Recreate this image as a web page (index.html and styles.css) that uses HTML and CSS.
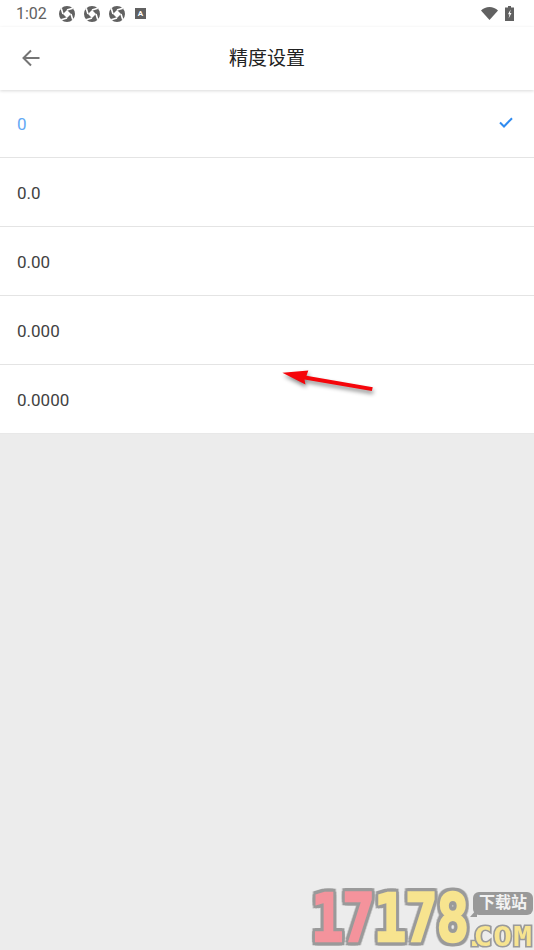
FILE: index.html
```html
<!doctype html>
<html lang="zh">
<head>
    <meta charset="utf-8">
    <meta name="viewport" content="width=device-width, initial-scale=1">
    <title>精度设置</title>
    <link rel="stylesheet" href="styles.css">
</head>
<body>

<div class="phone">
    <div class="status-bar">
        <span class="clock">1:02</span>
        <svg class="aperture" viewBox="0 0 16 16"><use href="#aperture"/></svg>
        <svg class="aperture" viewBox="0 0 16 16"><use href="#aperture"/></svg>
        <svg class="aperture" viewBox="0 0 16 16"><use href="#aperture"/></svg>
        <span class="key-badge">A</span>
        <span class="status-right">
            <svg class="wifi" viewBox="0 0 17 13"><path d="M0 3.600C2.300 1.400 5.200 0 8.500 0S14.700 1.400 17 3.600L8.500 13z" fill="#616161"/></svg>
            <svg class="battery" viewBox="0 0 9 15"><path d="M3 0h3v1.500h3V15H0V1.500h3z" fill="#616161"/><path d="M5.600 3.500L3 8.200h1.500L3.600 12.500l2.900-5.500H5z" fill="#fff"/></svg>
        </span>
    </div>

    <header class="toolbar">
        <svg class="back" viewBox="0 0 20 20"><path d="M18.500 10H3M10 2.500L2.500 10l7.500 7.500" fill="none" stroke="#757575" stroke-width="2"/></svg>
        <h1 class="title">精度设置</h1>
    </header>

    <ul class="options">
        <li class="option selected">
            <span>0</span>
            <svg class="check" viewBox="0 0 14 11"><path d="M1 5.500l4 4L13 1.200" fill="none" stroke="#2f8bf0" stroke-width="2"/></svg>
        </li>
        <li class="option"><span class="value">0.0</span></li>
        <li class="option"><span class="value">0.00</span></li>
        <li class="option"><span class="value">0.000</span></li>
        <li class="option"><span class="value">0.0000</span></li>
    </ul>
</div>

<svg class="red-arrow" viewBox="0 0 100 26">
    <path d="M1 4L28 1.500 26 7 95 19 94 23 24 11 25 16z" fill="#f5050a"/>
</svg>

<div class="watermark">
    <span class="wm-digits"><span class="wm-pink">17</span><span class="wm-yellow">178</span></span>
    <span class="wm-bubble">下载站</span>
    <span class="wm-com"><span class="wm-dot">.</span>COM</span>
</div>

<svg class="defs" width="0" height="0">
    <defs>
        <symbol id="aperture" viewBox="0 0 16 16">
            <circle cx="8" cy="8" r="8" fill="#616161"/>
            <path d="M8 4L12 8 8 12 4 8z" fill="#fff"/>
            <path d="M8 4L13.800 2.200M12 8L13.800 13.800M8 12L2.200 13.800M4 8L2.200 2.200" fill="none" stroke="#fff" stroke-width="1.600"/>
        </symbol>
    </defs>
</svg>

</body>
</html>
```

FILE: styles.css
```css
*, *:before, *:after {
    box-sizing: border-box;
    margin: 0;
    padding: 0;
}

html, body {
    height: 100%;
}

body {
    position: relative;
    overflow: hidden;
    background: #ececec;
    font-family: Roboto, "Noto Sans CJK SC", sans-serif;
}

.phone {
    display: flex;
    flex-direction: column;
}

.status-bar {
    display: flex;
    align-items: center;
    height: 27px;
    padding: 0 20px 0 16px;
    background: #fff;
}

.clock {
    width: 43px;
    font-size: 16px;
    color: #616161;
}

.aperture {
    width: 16px;
    height: 16px;
    margin-right: 9px;
}

.key-badge {
    width: 11px;
    height: 11px;
    margin-left: 1px;
    background: #616161;
    color: #fff;
    font-size: 8px;
    font-weight: 700;
    line-height: 11px;
    text-align: center;
}

.status-right {
    display: flex;
    align-items: center;
    gap: 7px;
    margin-left: auto;
}

.wifi {
    width: 17px;
    height: 13px;
}

.battery {
    width: 9px;
    height: 15px;
}

.toolbar {
    position: relative;
    z-index: 1;
    display: flex;
    align-items: center;
    justify-content: center;
    height: 63px;
    padding-bottom: 4px;
    background: #fff;
    box-shadow: 0 1px 3px rgba(0, 0, 0, 0.15);
}

.back {
    position: absolute;
    left: 21px;
    top: 21px;
    width: 20px;
    height: 20px;
}

.title {
    font-size: 19px;
    font-weight: 400;
    color: #212121;
}

.options {
    list-style: none;
    background: #fff;
}

.option {
    display: flex;
    align-items: center;
    justify-content: space-between;
    height: 69px;
    padding: 0 21px 0 17px;
    border-bottom: 1px solid #e4e4e4;
    font-size: 17px;
    color: #424242;
}

.option:first-child {
    height: 68px;
}

.option:last-child {
    border-bottom-color: #e8e8e8;
}

.value {
    margin-top: 2px;
}

.selected {
    color: #64a9f5;
}

.check {
    width: 14px;
    height: 11px;
    margin-bottom: 2px;
}

.red-arrow {
    position: absolute;
    left: 281px;
    top: 369px;
    width: 97px;
    height: 25px;
    overflow: visible;
    filter: drop-shadow(1px 3px 2px rgba(0, 0, 0, 0.45));
}

.watermark {
    position: absolute;
    right: 0;
    bottom: 0;
    width: 224px;
    height: 60px;
}

.wm-digits {
    position: absolute;
    left: 1px;
    top: 0;
    font-family: "DejaVu Sans Mono", monospace;
    font-size: 66px;
    font-weight: 700;
    line-height: 58px;
    letter-spacing: -1.500px;
    white-space: nowrap;
    transform: scaleX(0.82);
    transform-origin: left top;
    -webkit-text-stroke: 2.500px currentColor;
    filter: drop-shadow(3px 0 0 #9a9a9a) drop-shadow(-3px 0 0 #9a9a9a) drop-shadow(0 3px 0 #9a9a9a) drop-shadow(0 -3px 0 #9a9a9a);
}

.wm-pink {
    color: #f4939c;
}

.wm-yellow {
    color: #f7e48f;
}

.wm-bubble {
    position: absolute;
    right: 1px;
    top: 2px;
    width: 60px;
    height: 23px;
    border-radius: 6px;
    background: #999;
    color: #f2f2f2;
    font-size: 16px;
    font-weight: 700;
    line-height: 22px;
    text-align: center;
}

.wm-bubble:after {
    content: "";
    position: absolute;
    left: -3px;
    bottom: -2px;
    border-top: 8px solid transparent;
    border-right: 7px solid #999;
}

.wm-com {
    position: absolute;
    right: 1px;
    bottom: 0;
    font-family: "DejaVu Sans Mono", monospace;
    font-size: 27px;
    font-weight: 700;
    line-height: 26px;
    letter-spacing: 1px;
    white-space: nowrap;
    transform: scaleX(1.15);
    transform-origin: right top;
    color: #f7e48f;
    -webkit-text-stroke: 3px #9a9a9a;
    paint-order: stroke fill;
}

.wm-dot {
    letter-spacing: -9px;
}

.defs {
    position: absolute;
}
```
